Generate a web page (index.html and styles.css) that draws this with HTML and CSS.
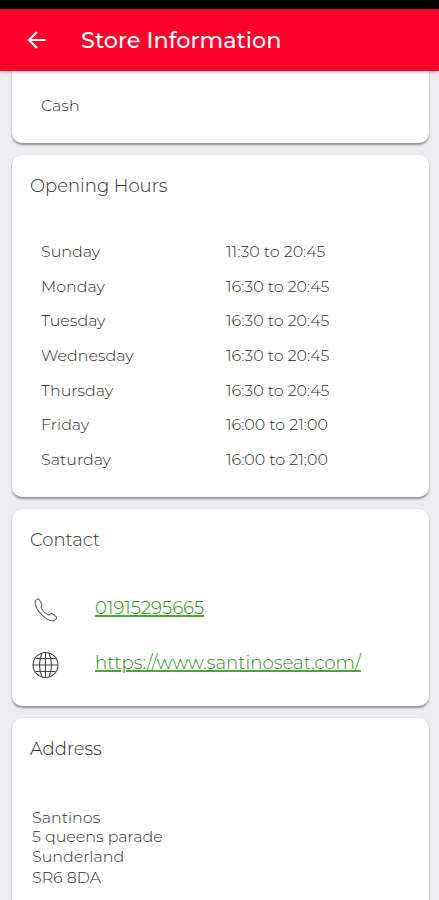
FILE: index.html
```html
<!DOCTYPE html>
<html lang="en">
<head>
<meta charset="utf-8">
<title>Store Information</title>
<link rel="stylesheet" href="styles.css">
</head>
<body>
<div class="status"></div>
<header class="bar">
  <svg class="back" viewBox="0 0 20 20"><path d="M18.500 10H2M10 2L2 10l8 8"/></svg>
  <h1>Store Information</h1>
</header>
<main>
  <section class="card payment"><p>Cash</p></section>
  <section class="card opening">
    <h2>Opening Hours</h2>
    <dl>
      <div><dt>Sunday</dt><dd>11:30 to 20:45</dd></div>
      <div><dt>Monday</dt><dd>16:30 to 20:45</dd></div>
      <div><dt>Tuesday</dt><dd>16:30 to 20:45</dd></div>
      <div><dt>Wednesday</dt><dd>16:30 to 20:45</dd></div>
      <div><dt>Thursday</dt><dd>16:30 to 20:45</dd></div>
      <div><dt>Friday</dt><dd>16:00 to 21:00</dd></div>
      <div><dt>Saturday</dt><dd>16:00 to 21:00</dd></div>
    </dl>
  </section>
  <section class="card contact">
    <h2>Contact</h2>
    <div class="row">
      <svg class="phone" viewBox="0 0 28 28"><path d="M5.700 3C3.700 4 2.700 5.900 3.300 8.300C4.800 15 12.300 23 19.400 24.800C21.800 25.400 23.500 24 24.500 22.400C24.900 21.600 24.500 21 23.900 20.500L20.400 17.800C19.600 17.200 18.900 17.300 18.300 17.900L16.900 19.200C13.500 17.700 10.400 14.600 9 11.400L9.800 10.100C10.200 9.400 10.100 8.700 9.700 8L7.200 3.500C6.800 2.900 6.300 2.700 5.700 3Z"/></svg>
      <a>01915295665</a>
    </div>
    <div class="row">
      <svg viewBox="0 0 28 28"><circle cx="13.500" cy="14" r="12.500"/><path d="M13.500 1.500v25M1 14h25M3.500 7.500h20M3.500 20.500h20M10 2Q5 14 10 26M17 2Q22 14 17 26"/></svg>
      <a>https://www.santinoseat.com/</a>
    </div>
  </section>
  <section class="card address">
    <h2>Address</h2>
    <address><span>Santinos</span><span>5 queens parade</span><span>Sunderland</span><span>SR6 8DA</span></address>
  </section>
</main>
</body>
</html>
```
FILE: styles.css
```css
* { box-sizing: border-box; margin: 0; padding: 0; }
html, body { height: 900px; overflow: hidden; }
body { background: #ededf1; color: #2a2a2a; font: 300 15.900px/20px Montserrat, Inter, sans-serif; white-space: nowrap; }
.status { height: 9px; background: #000; }
.bar { position: relative; height: 62px; background: #ff002b; display: flex; align-items: center; padding-left: 27px; color: #fff; box-shadow: 0 1px 3px rgba(0,0,0,.3); }
.back { width: 20px; height: 20px; fill: none; stroke: #fff; stroke-width: 2.1; }
h1 { margin-left: 34px; font-size: 22.350px; font-weight: 500; line-height: 30px; }
main { padding: 0 10px 0 12px; display: flex; flex-direction: column; gap: 12px; }
.card { background: #fff; border-radius: 10px; box-shadow: 0 1.500px 2px rgba(0,0,0,.38); }
.payment { height: 72px; border-radius: 0 0 10px 10px; padding: 25px 29px; }
.opening { height: 342px; padding: 20px 18px; }
h2 { font-size: 18px; font-weight: 300; line-height: 22px; }
dl { margin: 38px 0 0 11px; }
dl div { display: grid; grid-template-columns: 185px 1fr; height: 34.700px; line-height: 34.700px; }
.contact { height: 197px; padding: 20px 18px; }
.row { display: flex; align-items: center; gap: 35px; height: 55px; margin-left: 2px; }
.contact h2 { margin-bottom: 31px; }
.row svg { width: 28px; height: 28px; fill: none; stroke: #444; stroke-width: 1.100; }
.row .phone { stroke: #666; }
a { color: #26900f; font-size: 18.200px; text-decoration: underline #4ba53a; text-underline-offset: 1px; text-decoration-thickness: 1.500px; padding-bottom: 3px; }
.address { height: 220px; padding: 20px 18px; }
address { font-style: normal; margin: 47.500px 0 0 2px; display: flex; flex-direction: column; line-height: 19.500px; }
address span:last-child { margin-top: 1.500px; }
```
